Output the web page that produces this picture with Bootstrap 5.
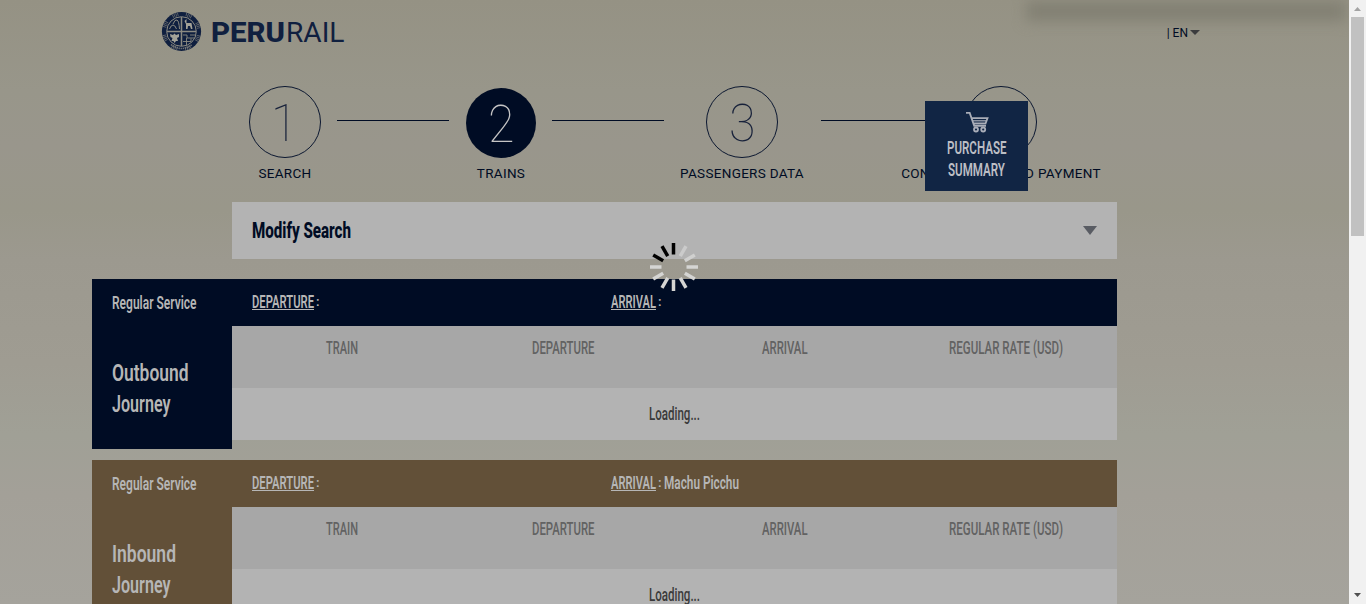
<!DOCTYPE html>
<html lang="en">
<head>
<meta charset="utf-8">
<meta name="viewport" content="width=device-width, initial-scale=1">
<title>PeruRail - Trains</title>
<link href="https://cdn.jsdelivr.net/npm/bootstrap@5.3.0/dist/css/bootstrap.min.css" rel="stylesheet">
<style>
:root{--navy:#000c24;--pale:#b3b3b3}
body{font-family:Roboto,"Liberation Sans",sans-serif;height:604px;overflow:hidden;background:#f1f1f1}
.page{width:1349px;height:604px;background:linear-gradient(#959284 0,#98968a 15%,#99968c 24%,#99978a 35%,#9c998f 43%,#9f9c92 60%,#a0a096 72%,#a3a098 82%,#a5a39c 100%)}
.glow{left:1026px;top:1px;width:320px;height:20px;background:#828073;filter:blur(7px)}
.topbar{height:86px;padding:11px 149px 0 161px}
.lang{font-size:12px;line-height:14px;color:var(--navy);margin-top:15px}
.tri{width:0;height:0;border:5px solid transparent;border-top:5px solid #3b3c3e;border-bottom:0}
.steps{height:116px;padding-left:249px}
.step-item{width:72px;flex:none}
.num{width:72px;height:72px;border:1px solid #0b1730;font-weight:100;font-size:52px;line-height:1;color:#17213a;padding-top:4px}
.num span{display:block;transform:scaleX(.93)}
.num.on{width:70px;height:70px;margin-top:2px;background:var(--navy);color:#c5c5c5;border:0}
.step-label{font-size:13.500px;line-height:16px;letter-spacing:.3px;margin-top:7px;color:var(--navy);white-space:nowrap}
.rule{width:112px;height:1px;background:var(--navy);margin-top:34px;flex:none}
.fit{display:block;height:20px;overflow:visible;flex:none;fill:currentColor;font-family:Roboto,"Liberation Sans",sans-serif;font-weight:600;font-size:18.5px}
.fit.tall{height:31px;font-size:24.300px}
.modify{width:885px;height:57px;margin-left:232px;padding:0 20px;background:var(--pale);color:var(--navy)}
.modify .fit{font-size:21.5px;font-weight:800}
.tri.big{border-width:9px 7px 0;border-top-color:#595c63}
.journey{width:1025px;margin-left:92px;height:170px;color:#b6b6b6}
.side{width:140px;padding:14px 20px 0;background:var(--tone)}
.route{height:47px;padding:13px 20px 0;background:var(--tone)}
.under{border-bottom:1px solid currentColor;height:18px}
.colon{font-size:13px;line-height:20px;font-weight:600;width:6px;padding-left:2px;flex:none}
.first{width:359px}
.heads{height:62px;padding-top:12px;background:#a7a7a7;color:#626262}
.heads .fit{font-weight:500}
.load{height:52px;padding-top:16px;background:var(--pale);color:#3a3a3a}
.load .fit{font-weight:500;font-size:18px}
.cart{left:925px;top:101px;width:103px;height:90px;background:#112544;color:#bcbec4;padding-top:10px}
.spin{left:649px;top:242px}
.track{width:17px;height:604px;background:#f1f1f1}
.thumb{width:13px;height:219px;background:#c1c1c1}
</style>
</head>
<body>
<div class="d-flex">
<main class="page position-relative overflow-hidden">
  <div class="glow position-absolute"></div>
  <header class="topbar d-flex justify-content-between position-relative">
    <div class="d-flex">
      <svg width="41" height="41" viewBox="0 0 41 41">
        <circle cx="20.5" cy="20.5" r="19.6" fill="#0f1f3f"/>
        <g fill="none" stroke="#8b8a82">
          <circle cx="20.5" cy="20.5" r="14.800"/>
          <circle cx="20.5" cy="20.5" r="17.500" stroke-width="3.600" stroke-dasharray=".8 .9 .8 .9 .8 .9 .8 7.840" stroke-dashoffset="-4" opacity=".7"/>
          <path d="M20.500 6v29M6 20.500h29" stroke-width="1.500"/>
          <path d="M8.500 18q1.500-4 3.500-4t3.500 4M12 13q2-5 4-4 2 1 2.500 9"/>
          <path d="M22 24h4v3h8M25.500 27v7M22 30.500h8v-3M29 24h5" stroke-width=".9"/>
          <path d="M10 33.500q10.500 8 21 0" stroke-width="1.600" stroke-dasharray="1.300 .8" opacity=".8"/>
        </g>
        <path d="M23.500 10l2-2v4h5l1 6h-1.500l-1-3h-2l-.5 3h-1.500v-5zM9 23l3 1 1.500-1.500 1.500 1.500 3-1v3l-2 1 1 3h-2l-1.500 2-1-2h-2l1-3-2-1z" fill="#a3a298"/>
      </svg>
      <svg class="fit ms-2" width="134" style="fill:#10203f;font-size:28px"><text x="1" y="30.500" textLength="74" lengthAdjust="spacingAndGlyphs" style="font-weight:800">PERU</text><text x="76" y="30.500" textLength="58.500" lengthAdjust="spacingAndGlyphs" style="font-weight:400">RAIL</text></svg>
    </div>
    <div class="lang d-flex"><span>| EN</span><i class="tri mt-1" style="margin-left:2px"></i></div>
  </header>

  <nav class="steps d-flex">
    <div class="step-item d-flex flex-column align-items-center"><div class="num rounded-circle d-flex align-items-center justify-content-center"><span style="margin-left:-2px">1</span></div><div class="step-label">SEARCH</div></div>
    <div class="rule" style="margin-left:16px;margin-right:16px"></div>
    <div class="step-item d-flex flex-column align-items-center"><div class="num on rounded-circle d-flex align-items-center justify-content-center"><span>2</span></div><div class="step-label">TRAINS</div></div>
    <div class="rule" style="margin-left:15px;margin-right:42px"></div>
    <div class="step-item d-flex flex-column align-items-center"><div class="num rounded-circle d-flex align-items-center justify-content-center"><span>3</span></div><div class="step-label">PASSENGERS DATA</div></div>
    <div class="rule" style="margin-left:43px;margin-right:32px"></div>
    <div class="step-item d-flex flex-column align-items-center"><div class="num rounded-circle d-flex align-items-center justify-content-center"><span>4</span></div><div class="step-label">CONFIRMATION AND PAYMENT</div></div>
  </nav>

  <section class="modify d-flex align-items-center justify-content-between">
    <svg class="fit" width="99"><text y="17" textLength="99" lengthAdjust="spacingAndGlyphs">Modify Search</text></svg>
    <i class="tri big"></i>
  </section>

  <section class="journey d-flex" style="--tone:#000c24;margin-top:20px">
    <div class="side">
      <svg class="fit" width="85"><text y="16" textLength="84.500" lengthAdjust="spacingAndGlyphs">Regular Service</text></svg>
      <svg class="fit tall" width="76" style="margin-top:44px"><text y="23.500" textLength="76.500" lengthAdjust="spacingAndGlyphs">Outbound</text></svg>
      <svg class="fit tall" width="58"><text y="23.500" textLength="58.500" lengthAdjust="spacingAndGlyphs">Journey</text></svg>
    </div>
    <div class="flex-grow-1">
      <div class="route d-flex">
        <div class="first d-flex"><div class="under"><svg class="fit" width="62"><text y="16" textLength="62" lengthAdjust="spacingAndGlyphs">DEPARTURE</text></svg></div><span class="colon">:</span></div>
        <div class="d-flex"><div class="under"><svg class="fit" width="45"><text y="16" textLength="45" lengthAdjust="spacingAndGlyphs">ARRIVAL</text></svg></div><span class="colon">:</span></div>
      </div>
      <div class="heads row g-0">
        <div class="col d-flex justify-content-center"><svg class="fit" width="33"><text y="16" textLength="32" lengthAdjust="spacingAndGlyphs">TRAIN</text></svg></div>
        <div class="col d-flex justify-content-center"><svg class="fit" width="63"><text y="16" textLength="62.500" lengthAdjust="spacingAndGlyphs">DEPARTURE</text></svg></div>
        <div class="col d-flex justify-content-center"><svg class="fit" width="46"><text y="16" textLength="45.500" lengthAdjust="spacingAndGlyphs">ARRIVAL</text></svg></div>
        <div class="col d-flex justify-content-center"><svg class="fit" width="114"><text y="16" textLength="114" lengthAdjust="spacingAndGlyphs">REGULAR RATE (USD)</text></svg></div>
      </div>
      <div class="load d-flex justify-content-center"><svg class="fit" width="51"><text y="16" textLength="51" lengthAdjust="spacingAndGlyphs">Loading...</text></svg></div>
    </div>
  </section>

  <section class="journey d-flex" style="--tone:#625038;margin-top:11px">
    <div class="side">
      <svg class="fit" width="85"><text y="16" textLength="84.500" lengthAdjust="spacingAndGlyphs">Regular Service</text></svg>
      <svg class="fit tall" width="63" style="margin-top:44px"><text y="23.500" textLength="64" lengthAdjust="spacingAndGlyphs">Inbound</text></svg>
      <svg class="fit tall" width="58"><text y="23.500" textLength="58.500" lengthAdjust="spacingAndGlyphs">Journey</text></svg>
    </div>
    <div class="flex-grow-1">
      <div class="route d-flex">
        <div class="first d-flex"><div class="under"><svg class="fit" width="62"><text y="16" textLength="62" lengthAdjust="spacingAndGlyphs">DEPARTURE</text></svg></div><span class="colon">:</span></div>
        <div class="d-flex"><div class="under"><svg class="fit" width="45"><text y="16" textLength="45" lengthAdjust="spacingAndGlyphs">ARRIVAL</text></svg></div><span class="colon">:</span><svg class="fit" width="75" style="margin-left:2px"><text y="16" textLength="75" lengthAdjust="spacingAndGlyphs">Machu Picchu</text></svg></div>
      </div>
      <div class="heads row g-0">
        <div class="col d-flex justify-content-center"><svg class="fit" width="33"><text y="16" textLength="32" lengthAdjust="spacingAndGlyphs">TRAIN</text></svg></div>
        <div class="col d-flex justify-content-center"><svg class="fit" width="63"><text y="16" textLength="62.500" lengthAdjust="spacingAndGlyphs">DEPARTURE</text></svg></div>
        <div class="col d-flex justify-content-center"><svg class="fit" width="46"><text y="16" textLength="45.500" lengthAdjust="spacingAndGlyphs">ARRIVAL</text></svg></div>
        <div class="col d-flex justify-content-center"><svg class="fit" width="114"><text y="16" textLength="114" lengthAdjust="spacingAndGlyphs">REGULAR RATE (USD)</text></svg></div>
      </div>
      <div class="load d-flex justify-content-center"><svg class="fit" width="51"><text y="16" textLength="51" lengthAdjust="spacingAndGlyphs">Loading...</text></svg></div>
    </div>
  </section>

  <aside class="cart position-absolute d-flex flex-column align-items-center">
    <svg width="24" height="22" viewBox="0 0 24 22" fill="none" stroke="#a9adb8" stroke-width="1.800">
      <path d="M1 1.900h3.700l4.500 13h11.800M6.500 7.200h16l-2 5.300h-12"/><path d="M8 9.800h13" stroke-width="1.200"/>
      <circle cx="11" cy="18.500" r="2"/><circle cx="18.200" cy="18.500" r="2"/>
    </svg>
    <svg class="fit" width="60" style="margin-top:5px"><text y="16" textLength="59.500" lengthAdjust="spacingAndGlyphs">PURCHASE</text></svg>
    <svg class="fit" width="57" style="margin-top:2px"><text y="16" textLength="57" lengthAdjust="spacingAndGlyphs">SUMMARY</text></svg>
  </aside>

  <svg class="spin position-absolute" width="50" height="50" viewBox="-25 -25 50 50" stroke-width="3.500">
    <g stroke="#000"><path d="M-.5-12.500v-11.500"/><path d="M0-12.500v-11.500" transform="rotate(-30)"/><path d="M0-12.500v-11.500" transform="rotate(-60)"/></g>
    <g stroke="#d5d5d3"><path d="M0-12.500v-11.500" transform="rotate(-90)"/><path d="M0-12.500v-11.500" transform="rotate(-120)"/><path d="M0-12.500v-11.500" transform="rotate(-150)"/><path d="M.5-12.500v-11.500" transform="rotate(180)"/><path d="M0-12.500v-11.500" transform="rotate(150)"/><path d="M0-12.500v-11.500" transform="rotate(120)"/><path d="M0-12.500v-11.500" transform="rotate(90)"/><path d="M0-12.500v-11.500" transform="rotate(60)" stroke="#d0d0cf"/><path d="M0-12.500v-11.500" transform="rotate(30)" stroke="#cbcbcb"/></g>
  </svg>
</main>
<div class="track d-flex flex-column align-items-center">
  <svg width="17" height="17"><path d="M5 11h7l-3.500-4z" fill="#a3a3a3"/></svg>
  <div class="thumb"></div>
  <svg class="mt-auto" width="17" height="17"><path d="M5 6h7l-3.500 4z" fill="#505050"/></svg>
</div>
</div>
<script src="https://cdn.jsdelivr.net/npm/bootstrap@5.3.0/dist/js/bootstrap.bundle.min.js"></script>
</body>
</html>
